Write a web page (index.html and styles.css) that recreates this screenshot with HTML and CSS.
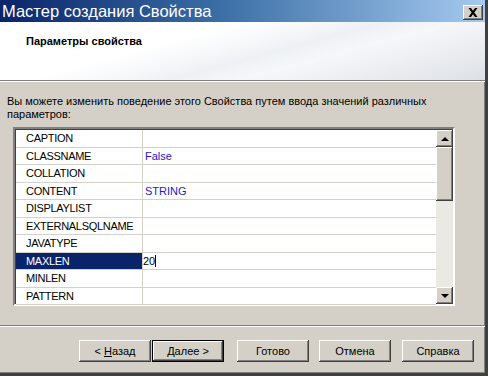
FILE: index.html
```html
<!DOCTYPE html>
<html lang="ru">
<head>
    <meta charset="UTF-8">
    <title>Мастер создания Свойства</title>
    <link rel="stylesheet" href="styles.css">
</head>
<body>
    <div class="window">
        <div class="titlebar">
            <span class="title">Мастер создания Свойства</span>
            <button class="close">
                <svg width="10" height="9" viewBox="0 0 10 9">
                    <path d="M0.5 0h2.5l2 2.8L7 0h2.5L6.3 4.5 9.5 9H7L5 6.2 3 9H0.5l3.2-4.5z" fill="#000"/>
                </svg>
            </button>
        </div>

        <div class="header">
            <h3>Параметры свойства</h3>
        </div>
        <div class="sep"></div>

        <p class="desc">Вы можете изменить поведение этого Свойства путем ввода значений различных параметров:</p>

        <div class="grid">
            <div class="rows">
                <div class="row"><div class="name">CAPTION</div><div class="value"></div></div>
                <div class="row"><div class="name">CLASSNAME</div><div class="value">False</div></div>
                <div class="row"><div class="name">COLLATION</div><div class="value"></div></div>
                <div class="row"><div class="name">CONTENT</div><div class="value">STRING</div></div>
                <div class="row"><div class="name">DISPLAYLIST</div><div class="value"></div></div>
                <div class="row"><div class="name">EXTERNALSQLNAME</div><div class="value"></div></div>
                <div class="row"><div class="name">JAVATYPE</div><div class="value"></div></div>
                <div class="row selected"><div class="name">MAXLEN</div><div class="value edit">20<span class="caret"></span></div></div>
                <div class="row"><div class="name">MINLEN</div><div class="value"></div></div>
                <div class="row"><div class="name">PATTERN</div><div class="value"></div></div>
            </div>
            <div class="scrollbar">
                <div class="sbtn"><span class="arrow up"></span></div>
                <div class="thumb"></div>
                <div class="track"></div>
                <div class="sbtn"><span class="arrow down"></span></div>
            </div>
        </div>

        <div class="sep bottom"></div>

        <div class="buttons">
            <button class="btn back">&lt; <u>Н</u>азад</button>
            <button class="btn default"><u>Д</u>алее &gt;</button>
            <button class="btn finish">Готово</button>
            <button class="btn cancel">Отмена</button>
            <button class="btn help">Справка</button>
        </div>
    </div>
</body>
</html>
```

FILE: styles.css
```css
body {
    margin: 0;
    font-family: "Liberation Sans", Arial, sans-serif;
    font-size: 11px;
    color: #000;
}

.window {
    width: 485px;
    height: 373px;
    background-color: #d4d0c8;
    border-right: 3px solid #404040;
    border-bottom: 3px solid #404040;
    box-shadow: inset -1px -1px #808080;
    display: flex;
    flex-direction: column;
}

.titlebar {
    height: 22px;
    background: linear-gradient(to right, #0a246a, #3a6ea5 45%, #a6caf0);
    display: flex;
    align-items: center;
    justify-content: space-between;
    padding: 0 2px 0 2px;
}

.title {
    color: #fff;
    font-size: 16.5px;
    line-height: 22px;
}

.close {
    width: 20px;
    height: 15px;
    margin-top: 3px;
    padding: 0;
    border: none;
    background-color: #d4d0c8;
    box-shadow: inset -1px -1px #404040, inset 1px 1px #fff, inset -2px -2px #808080;
    display: flex;
    align-items: center;
    justify-content: center;
}

.header {
    height: 58px;
    background: linear-gradient(165deg, #fff 0%, #fff 35%, #eef1f4 55%, #f6f7f9 65%, #dde1e6 100%);
}

.header h3 {
    margin: 0;
    padding: 13px 0 0 26px;
    font-size: 11px;
    line-height: 13px;
    font-weight: bold;
}

.sep {
    height: 1px;
    border-top: 1px solid #808080;
    background-color: #fff;
}

.desc {
    margin: 13px 0 0 7px;
    line-height: 13px;
    width: 430px;
}

.grid {
    margin: 6px 0 0 13px;
    width: 438px;
    height: 175px;
    border: 2px solid;
    border-color: #808080 #fff #fff #808080;
    box-shadow: inset 1px 1px #404040;
    display: flex;
    background-color: #fff;
}

.rows {
    flex: 1;
    padding: 1px 0 0 1px;
}

.row {
    display: flex;
    height: 16.5px;
    line-height: 16.5px;
    border-bottom: 1px solid #d4d0c8;
}

.name {
    width: 116px;
    padding-left: 10px;
    letter-spacing: -0.3px;
    border-right: 1px solid #d4d0c8;
}

.value {
    flex: 1;
    padding-left: 2px;
    color: #1a1acc;
}

.selected .name {
    background-color: #0a246a;
    color: #fff;
}

.value.edit {
    color: #000;
    padding-left: 0;
    display: flex;
    align-items: center;
}

.caret {
    width: 1px;
    height: 12px;
    background-color: #000;
}

.scrollbar {
    width: 17px;
    margin-top: 1px;
    display: flex;
    flex-direction: column;
    background-color: #ebe9e4;
}

.sbtn, .thumb {
    background-color: #d4d0c8;
    box-shadow: inset -1px -1px #404040, inset 1px 1px #fff, inset -2px -2px #808080;
}

.sbtn {
    height: 17px;
    display: flex;
    align-items: center;
    justify-content: center;
}

.thumb {
    height: 54px;
}

.track {
    flex: 1;
}

.arrow {
    width: 0;
    height: 0;
    border-left: 4px solid transparent;
    border-right: 4px solid transparent;
}

.arrow.up {
    border-bottom: 4px solid #000;
}

.arrow.down {
    border-top: 4px solid #000;
}

.sep.bottom {
    margin-top: 19px;
}

.buttons {
    display: flex;
    margin-top: 13px;
    padding-left: 79px;
}

.btn {
    width: 72px;
    height: 22px;
    padding: 0;
    border: none;
    background-color: #d4d0c8;
    font-family: "Liberation Sans", Arial, sans-serif;
    font-size: 11px;
    color: #000;
    box-shadow: inset -1px -1px #404040, inset 1px 1px #fff, inset -2px -2px #808080;
}

.btn u {
    text-decoration: underline;
}

.btn.default {
    margin-left: 1px;
    border: 1px solid #000;
}

.btn.finish {
    margin-left: 13px;
}

.btn.cancel {
    margin-left: 10px;
}

.btn.help {
    margin-left: 11px;
}
```
